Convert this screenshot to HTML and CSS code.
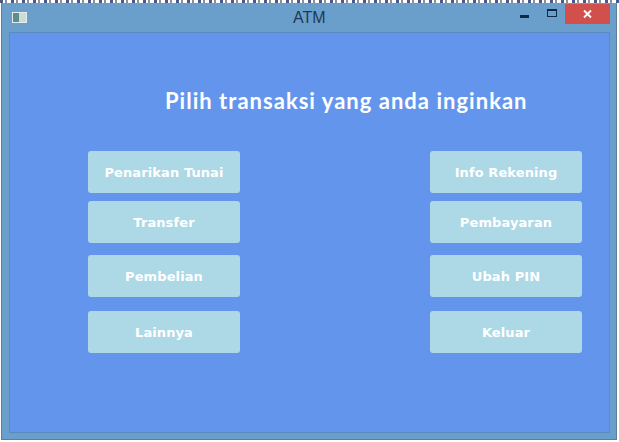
FILE: index.html

```html
<!DOCTYPE html>
<html lang="en">
<head>
  <meta charset="UTF-8" />
  <title>ATM</title>
  <link rel="stylesheet" href="styles.css">
</head>
<body>
  <div class="behind"></div>

  <div class="window">
    <header class="titlebar">
      <span class="app-icon"><span class="app-icon-dark"></span><span class="app-icon-light"></span></span>
      <span class="title">ATM</span>
      <span class="controls">
        <span class="ctl ctl-min"></span>
        <span class="ctl ctl-max"></span>
        <span class="ctl-close">
          <svg width="11" height="10" viewBox="0 0 11 10"><path d="M2 1.5 L9 8.5 M9 1.5 L2 8.5" stroke="#fff" stroke-width="1.8" fill="none" /></svg>
        </span>
      </span>
    </header>

    <main class="client">
      <h1>Pilih transaksi yang anda inginkan</h1>
      <div class="menu">
        <div class="col">
          <button class="first">Penarikan Tunai</button>
          <button class="second">Transfer</button>
          <button class="third">Pembelian</button>
          <button class="fourth">Lainnya</button>
        </div>
        <div class="col">
          <button class="first">Info Rekening</button>
          <button class="second">Pembayaran</button>
          <button class="third">Ubah PIN</button>
          <button class="fourth">Keluar</button>
        </div>
      </div>
    </main>
  </div>
</body>
</html>
```

FILE: styles.css

```css
:root {
  --frame: #6a9fcb;
  --client: #6495ed;
  --button: #add8e6;
}

html, body {
  margin: 0;
  height: 442px;
  overflow: hidden;
}

body {
  background: #ffffff;
  font-family: "Liberation Sans", sans-serif;
}

/* whatever sits behind the window, only a sliver of it shows */
.behind {
  height: 3px;
  background: repeating-linear-gradient(90deg, #4a5a8a 0 3px, #ffffff 3px 5px, #8a8f99 5px 7px, #ffffff 7px 11px);
}

.window {
  width: 616px;
  height: 437px;
  margin-left: 1px;
  box-sizing: border-box;
  padding: 0 6px 6px 7px;
  background: var(--frame);
  border: 1px solid #5d7f98;
  border-top-color: #6f9cc0;
}

.titlebar {
  height: 28px;
  display: flex;
  align-items: flex-start;
  position: relative;
}

.app-icon {
  display: flex;
  width: 15px;
  height: 11px;
  margin: 8px 0 0 3px;
  box-sizing: border-box;
  border: 1px solid #e4ecef;
  background: #e4ecef;
}

.app-icon-dark {
  width: 6px;
  background: #5b8f8c;
}

.app-icon-light {
  flex: 1;
  background: #cfdcd4;
}

.title {
  position: absolute;
  left: 284px;
  top: 5px;
  font-size: 16px;
  line-height: 18px;
  color: #1d3a55;
}

.controls {
  position: absolute;
  right: 0;
  top: 0;
  display: flex;
  align-items: flex-start;
}

.ctl {
  display: block;
  box-sizing: border-box;
}

.ctl-min {
  width: 9px;
  height: 3px;
  background: #0f2a47;
  margin: 11px 18px 0 0;
}

.ctl-max {
  width: 10px;
  height: 8px;
  border: 1px solid #0f2a47;
  border-top-width: 2px;
  margin: 5px 8px 0 0;
}

.ctl-close {
  width: 45px;
  height: 20px;
  background: #d1504c;
  display: flex;
  align-items: center;
  justify-content: center;
}

.client {
  height: 401px;
  box-sizing: border-box;
  background: var(--client);
  border: 1px solid #5a8ac0;
  padding-top: 54px;
}

h1 {
  margin: 0 0 0 155px;
  font-family: Lato, sans-serif;
  font-size: 22px;
  font-weight: 700;
  line-height: 27px;
  letter-spacing: 1.02px;
  color: #ffffff;
  white-space: nowrap;
}

.menu {
  display: flex;
  justify-content: space-between;
  margin: 37px 27px 0 78px;
}

.col {
  display: flex;
  flex-direction: column;
  width: 152px;
}

button {
  height: 42px;
  padding: 0;
  border: none;
  border-radius: 3px;
  background: var(--button);
  color: #ffffff;
  font-family: "DejaVu Sans", sans-serif;
  font-size: 13px;
  font-weight: 700;
  letter-spacing: 0.1px;
}

.second { margin-top: 8px; }
.third { margin-top: 12px; }
.fourth { margin-top: 14px; }
```
